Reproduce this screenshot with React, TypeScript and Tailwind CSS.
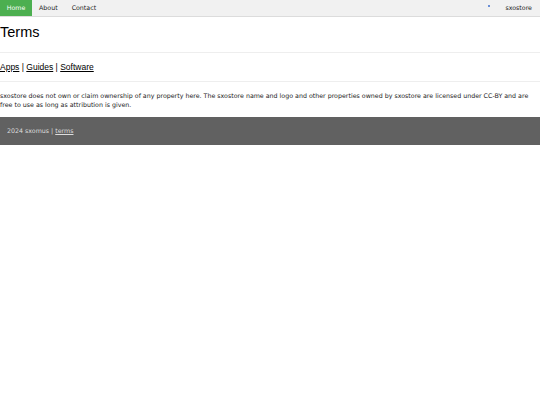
export default function App() {
  const verdana = { fontFamily: '"DejaVu Sans", Verdana, sans-serif' };
  return (
    <div className="min-h-[405px] bg-white text-black" style={verdana}>
      <nav className="flex h-[17px] items-stretch justify-between border-b border-[#dcdcdc] bg-[#f1f1f1] text-[6.3px]">
        <div className="flex items-stretch">
          <a className="flex w-[32px] items-center justify-center bg-[#4caf50] text-white">Home</a>
          <a className="flex items-center px-[7px] text-[#222]">About</a>
          <a className="flex items-center px-[7px] text-[#222]">Contact</a>
        </div>
        <div className="flex items-stretch">
          <span className="mr-[15px] mt-[5px] h-[2px] w-[2px] bg-[#6b8fd6]" />
          <a className="flex items-center pr-[8px] text-[#222]">sxostore</a>
        </div>
      </nav>
      <h1
        className="mt-[6px] text-[14.5px] leading-[18px]"
        style={{ fontFamily: '"Liberation Sans", Arial, sans-serif' }}
      >
        Terms
      </h1>
      <hr className="mx-0 mt-[11px] border-t border-[#eeeeee]" />
      <div
        className="mt-[9px] text-[8.5px] leading-[10px]"
        style={{ fontFamily: '"Liberation Sans", Arial, sans-serif' }}
      >
        <a className="underline">Apps</a> | <a className="underline">Guides</a> |{" "}
        <a className="underline">Software</a>
      </div>
      <hr className="mt-[9px] border-t border-[#eeeeee]" />
      <p className="mt-[9px] text-[6.3px] leading-[9px] text-[#222]">
        sxostore does not own or claim ownership of any property here. The sxostore name and logo and
        other properties owned by sxostore are licensed under CC-BY and are free to use as long as
        attribution is given.
      </p>
      <footer className="mt-[8px] flex h-[28px] items-center bg-[#616161] px-[7px] text-[6.3px] text-[#dddddd]">
        <span>
          2024 sxomus | <a className="underline">terms</a>
        </span>
      </footer>
    </div>
  );
}
